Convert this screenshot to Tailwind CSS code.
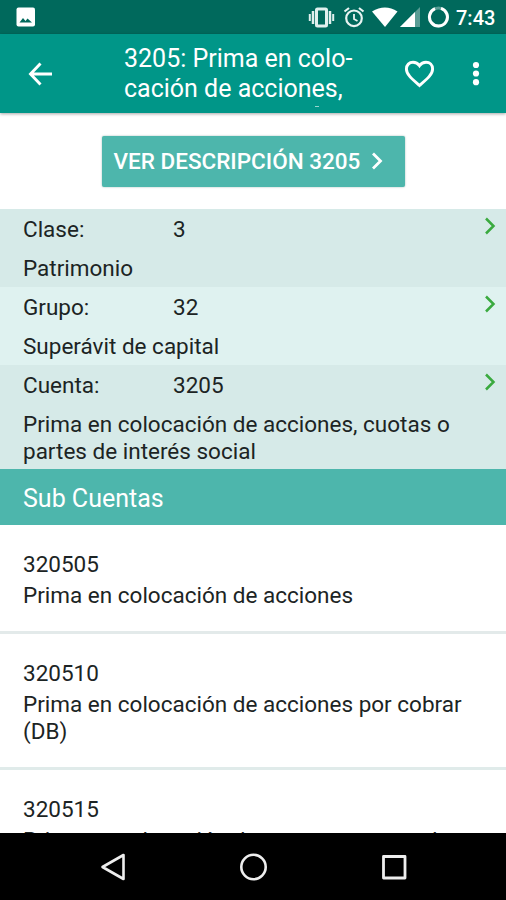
<!DOCTYPE html>
<html lang="es">
<head>
<meta charset="utf-8">
<title>3205: Prima en colocación de acciones</title>
<script src="https://cdn.jsdelivr.net/npm/@tailwindcss/browser@4"></script>
</head>
<body class="w-[506px] h-[900px] overflow-hidden bg-white font-['Roboto',sans-serif] text-[22.5px] leading-[27px] text-[#1c2424] flex flex-col">
  <div class="h-[34px] shrink-0 bg-[#00695c] flex items-center justify-between pl-4 pr-[11px]">
    <svg width="20" height="20" viewBox="0 0 20 20"><rect x=".5" y=".5" width="18.5" height="19" rx="2" fill="#fff"/><path d="M3.5 15.5 7 11l2.5 3 2-2.5 4.5 4z" fill="#00695c"/></svg>
    <div class="flex items-center text-white">
      <svg width="27" height="22" viewBox="0 0 27 22" fill="none" stroke="#e0f0ee"><rect x="8.5" y="3" width="10" height="17" rx="1" stroke-width="3"/><path d="M5 5v13M22 5v13" stroke-width="2.5"/><path d="M1.8 8v7M25.2 8v7" stroke-width="2"/></svg>
      <svg class="ml-[8px]" width="22" height="22" viewBox="0 0 22 22" fill="none" stroke="#e8f4f2"><circle cx="11" cy="12.3" r="7.8" stroke-width="2.2"/><path d="M1.5 5.5 6 2M20.500 5.500 16 2" stroke-width="2.2"/><path d="M11 8v5l3.500 2" stroke-width="1.8"/></svg>
      <svg class="ml-[7px]" width="26" height="22" viewBox="0 0 26 22"><path d="M0 5.500Q13-2.500 25.500 5.500L13 21z" fill="#fff"/></svg>
      <svg class="ml-[2px]" width="20" height="22" viewBox="0 0 20 22"><path d="M0 21 20 1v20z" fill="#fff" fill-opacity=".35"/><path d="M0 21 15 6v15z" fill="#fff"/></svg>
      <svg class="ml-[7px]" width="23" height="22" viewBox="0 0 23 22" fill="none" stroke="#fff" stroke-width="3"><circle cx="11.500" cy="11" r="9" stroke-opacity=".35"/><path d="M14 2.400A9 9 0 1 1 8 2.700"/></svg>
      <span class="ml-[6px] text-[20px] font-medium leading-[22px] w-[39px] whitespace-nowrap pt-[2px]">7:43</span>
    </div>
  </div>

  <header class="relative z-10 h-[79px] shrink-0 bg-[#009688] shadow-[0_1px_3px_rgba(0,0,0,0.35)] flex items-center text-white">
    <svg class="ml-[28px] shrink-0" width="25" height="24" viewBox="0 0 25 24" fill="none" stroke="#fff" stroke-width="2.900"><path d="M24 12H2.500M12.500 1.500 2.500 12l10 10.500"/></svg>
    <h1 class="ml-[71px] w-[262px] text-[25px] leading-[29.5px] whitespace-nowrap">3205: Prima en colo-<br>cación de acciones,</h1>
    <svg class="ml-[18px] shrink-0" width="31" height="28" viewBox="0 0 31 28" fill="none" stroke="#fff" stroke-width="2.900"><path d="M15.500 25.500C8 19 2.400 14.500 2.400 9 2.400 5 5.300 2.300 9 2.300c2.600 0 5 1.300 6.500 3.500C17 3.600 19.400 2.300 22 2.300c3.700 0 6.600 2.700 6.600 6.700 0 5.500-5.600 10-13.100 16.500z"/></svg>
    <svg class="ml-[37px] shrink-0" width="8" height="26" viewBox="0 0 8 26" fill="#fff"><circle cx="4" cy="4" r="3.100"/><circle cx="4" cy="12.500" r="3.100"/><circle cx="4" cy="21.200" r="3.100"/></svg>
    <span class="absolute left-[315px] top-[72px] w-1 h-px bg-white/60"></span>
  </header>

  <div class="h-[95.500px] shrink-0 flex justify-center pt-[22.500px]">
    <button class="w-[303px] h-[51px] rounded-[2px] bg-[#4db6ac] shadow-[0_0_2px_rgba(0,80,70,0.4)] text-white font-medium flex items-center pl-3 whitespace-nowrap">
      <span class="w-[246px] text-left">VER DESCRIPCIÓN 3205</span>
      <svg class="ml-[11px]" width="13" height="18" viewBox="0 0 13 18" fill="none" stroke="#fff" stroke-width="2.800"><path d="M2 1.500 9.500 9 2 16.500"/></svg>
    </button>
  </div>

  <section class="shrink-0">
    <div class="h-[78px] bg-[#d6eae8] pl-[23px] pr-[10px] pt-[7px]">
      <div class="flex"><span class="w-[150px]">Clase:</span><span class="flex-1">3</span><svg class="mt-[1px]" width="12" height="18" viewBox="0 0 12 18" fill="none" stroke="#3aaa3f" stroke-width="2.500"><path d="M2 1.500 9.500 9 2 16.500"/></svg></div>
      <p class="mt-3">Patrimonio</p>
    </div>
    <div class="h-[78px] bg-[#dff2f0] pl-[23px] pr-[10px] pt-[7px]">
      <div class="flex"><span class="w-[150px]">Grupo:</span><span class="flex-1">32</span><svg class="mt-[1px]" width="12" height="18" viewBox="0 0 12 18" fill="none" stroke="#3aaa3f" stroke-width="2.500"><path d="M2 1.500 9.500 9 2 16.500"/></svg></div>
      <p class="mt-3">Superávit de capital</p>
    </div>
    <div class="h-[104.500px] bg-[#d6eae8] pl-[23px] pr-[10px] pt-[7px]">
      <div class="flex"><span class="w-[150px]">Cuenta:</span><span class="flex-1">3205</span><svg class="mt-[1px]" width="12" height="18" viewBox="0 0 12 18" fill="none" stroke="#3aaa3f" stroke-width="2.500"><path d="M2 1.500 9.500 9 2 16.500"/></svg></div>
      <p class="mt-3 whitespace-nowrap">Prima en colocación de acciones, cuotas o<br>partes de interés social</p>
    </div>
  </section>

  <h2 class="h-[56px] shrink-0 bg-[#4db6ac] text-white text-[25px] pl-[23px] flex items-center pt-[3px]">Sub Cuentas</h2>

  <main class="h-[308px] shrink-0 overflow-hidden whitespace-nowrap">
    <div class="h-[109px] border-b-[3px] border-[#e3eaea] pl-[23px] pt-[26px]"><p>320505</p><p class="mt-[3.500px]">Prima en colocación de acciones</p></div>
    <div class="h-[136px] border-b-[3px] border-[#e0ebea] pl-[23px] pt-[26px]"><p>320510</p><p class="mt-[3.500px]">Prima en colocación de acciones por cobrar<br>(DB)</p></div>
    <div class="pl-[23px] pt-[26px]"><p>320515</p><p class="mt-[3.500px]">Prima en colocación de cuotas o partes de</p></div>
  </main>

  <nav class="h-[67px] shrink-0 bg-black flex items-center">
    <svg class="ml-[100px]" width="27" height="28" viewBox="0 0 27 28" fill="none" stroke="#eee" stroke-width="2.600" stroke-linejoin="round"><path d="M23.500 2v24L2.500 14z"/></svg>
    <svg class="ml-[112px]" width="29" height="28" viewBox="0 0 29 28" fill="none" stroke="#eee" stroke-width="2.600"><circle cx="14.500" cy="14" r="12.200"/></svg>
    <svg class="ml-[113px]" width="26" height="26" viewBox="0 0 26 26" fill="none" stroke="#eee" stroke-width="2.800" stroke-linejoin="round"><rect x="2.500" y="2.500" width="21.500" height="21.500"/></svg>
  </nav>
</body>
</html>
